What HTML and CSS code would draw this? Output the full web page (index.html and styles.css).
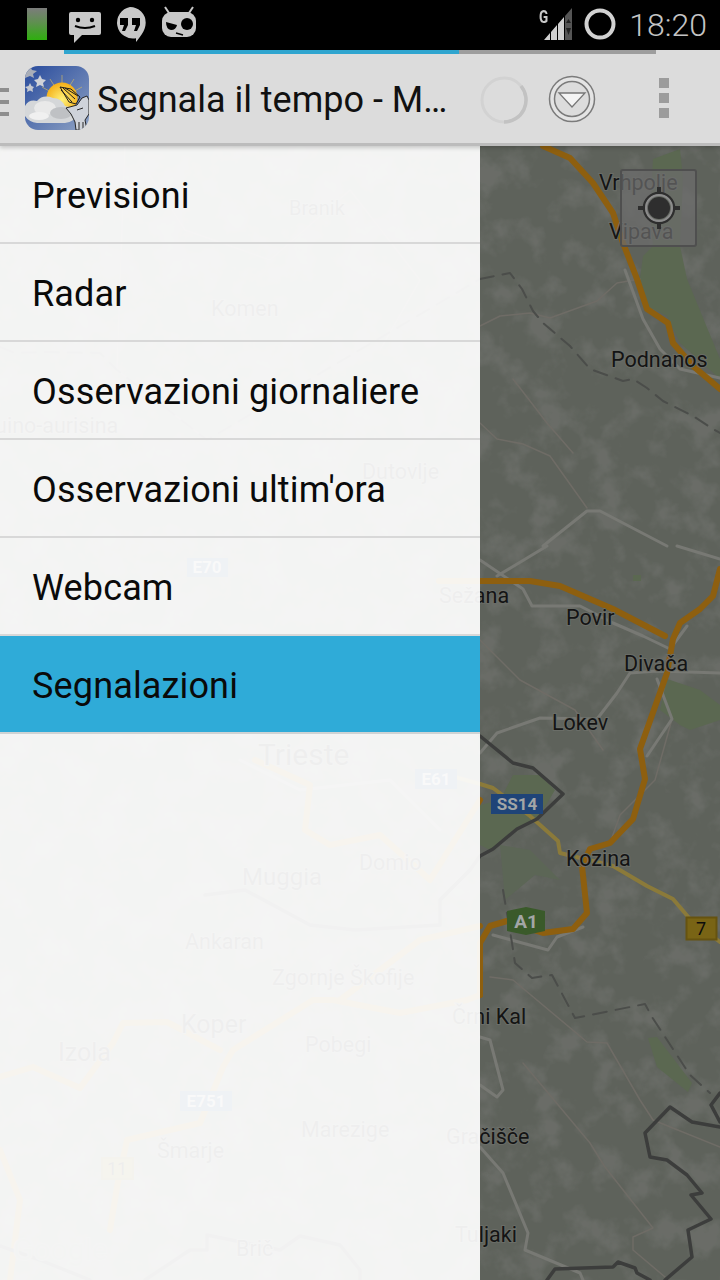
FILE: index.html
```html
<!DOCTYPE html>
<html lang="en">
<head>
  <meta charset="UTF-8" />
  <meta name="viewport" content="width=device-width, initial-scale=1.0" />
  <title>Segnala il tempo</title>
  <link rel="stylesheet" href="styles.css">
</head>
<body>
  <div class="screen">
    <div class="status-bar">
      <svg class="st-battery" width="20" height="32" viewBox="0 0 20 32">
        <defs>
          <linearGradient id="batt" x1="0" y1="0" x2="0" y2="1">
            <stop offset="0" stop-color="#7c7c7c"/>
            <stop offset="0.45" stop-color="#5f8f50"/>
            <stop offset="1" stop-color="#2eaf0e"/>
          </linearGradient>
        </defs>
        <rect width="20" height="32" fill="url(#batt)"/>
      </svg>
      <svg class="st-msg" width="34" height="32" viewBox="0 0 34 32">
        <path d="M3 0H31Q33 0 33 2V21Q33 23 31 23H14L6 31V23H3Q1 23 1 21V2Q1 0 3 0Z" fill="#c8c8c8"/>
        <circle cx="10" cy="8" r="2.2" fill="#000"/>
        <circle cx="24" cy="8" r="2.2" fill="#000"/>
        <path d="M7 14Q17 18 27 14" stroke="#000" stroke-width="2" fill="none"/>
      </svg>
      <svg class="st-hang" width="32" height="36" viewBox="0 0 32 36">
        <path d="M16 0A15.7 15.7 0 0 1 31.700 15.700C31.700 24 25 31 22 35V31.300A15.700 15.700 0 1 1 16 0Z" fill="#c8c8c8"/>
        <path d="M6 11H14V18L11 24H8L10 18H6ZM18 11H26V18L23 24H20L22 18H18Z" fill="#000"/>
      </svg>
      <svg class="st-cid" width="36" height="32" viewBox="0 0 36 32">
        <path d="M4 1L8 7H28L32 1" stroke="#c8c8c8" stroke-width="2" fill="none"/>
        <rect x="1" y="6" width="34" height="25" rx="9" fill="#c8c8c8"/>
        <path d="M5 16L16 19Q15 24 10 24Q5 23 5 16Z" fill="#000"/>
        <circle cx="26" cy="18" r="6" fill="#000"/>
        <path d="M15 27L22 29" stroke="#000" stroke-width="1.500"/>
      </svg>
      <div class="st-right">
        <span class="st-g">G</span>
        <svg class="st-signal" width="28" height="32" viewBox="0 0 28 32">
          <path d="M0 32L6 25V32ZM7 24L13 17V32H7ZM14 16L20 9V32H14Z" fill="#d0d0d0"/>
          <path d="M21 8L28 0V32H21Z" fill="#555"/>
          <path d="M24.500 11L27 15H22ZM24.500 27L22 20H27Z" fill="#222"/>
        </svg>
        <svg class="st-ring" width="32" height="32" viewBox="0 0 32 32">
          <circle cx="16" cy="16" r="13.500" stroke="#d2d2d2" stroke-width="4" fill="none"/>
        </svg>
        <span class="st-time">18:20</span>
      </div>
    </div>

    <div class="action-bar">
      <div class="progress"><div class="progress-fill"></div></div>
      <div class="action-row">
        <div class="up-bars"><i></i><i></i><i></i></div>
        <svg class="app-icon" width="64" height="64" viewBox="0 0 64 64">
          <defs>
            <linearGradient id="sky" x1="0" y1="0" x2="1" y2="1">
              <stop offset="0" stop-color="#274a9c"/>
              <stop offset="1" stop-color="#8ea2c4"/>
            </linearGradient>
            <radialGradient id="sun" cx="0.5" cy="0.55" r="0.6">
              <stop offset="0" stop-color="#fff27a"/>
              <stop offset="1" stop-color="#f3a90f"/>
            </radialGradient>
            <clipPath id="iconclip"><rect width="64" height="64" rx="13"/></clipPath>
          </defs>
          <g clip-path="url(#iconclip)">
            <rect width="64" height="64" fill="url(#sky)"/>
            <path d="M5 0L7 4L12 5L8 8L9 12L5 10L0 12V3Z" fill="#a9aeb8"/>
            <path d="M15 9L17 13L21 14L18 17L19 21L15 19L11 21L12 17L9 14L13 13Z" fill="#cfd2d8"/>
            <path d="M5 17L6.500 20L9 21L7.500 23L8 26L5 24.500L2 26L2.500 23L0 21L3.500 20Z" fill="#c4c8d0"/>
            <g stroke="#c9b56c" stroke-width="1" opacity="0.7">
              <path d="M37 32V9M37 32L25 13M37 32L49 13M37 32L17 21M37 32L57 21"/>
            </g>
            <circle cx="37" cy="32" r="15.500" fill="url(#sun)"/>
            <path d="M0 40Q4 33 12 35Q18 28 28 32Q36 32 40 40Q50 41 52 48Q50 56 40 57H12Q4 56 0 50Z" fill="#d5d7d9"/>
            <ellipse cx="20" cy="42" rx="11" ry="7" fill="#e9e9e9"/>
            <ellipse cx="14" cy="50" rx="10" ry="4" fill="#f0f0f0"/>
            <ellipse cx="36" cy="47" rx="11" ry="6" fill="#bfc1c4"/>
            <path d="M35 21L46 23L55 31L51 38L44 36ZM38 22L50 33M36 24L47 36M40 22L53 30" stroke="#1c1c1c" stroke-width="1" fill="none"/>
            <path d="M41 42L52 39L57 32L62 30L64 34V48L60 54L62 64H51L50 56L46 48Z" fill="#cfd3da" stroke="#262626" stroke-width="1"/>
            <path d="M52 44L58 42M54 56V64M58 56V64" stroke="#262626" stroke-width="1" fill="none"/>
          </g>
        </svg>
        <span class="app-title">Segnala il tempo - M…</span>
        <svg class="spinner" width="52" height="52" viewBox="0 0 52 52">
          <circle cx="26" cy="26" r="22" stroke="#d2d2d2" stroke-width="3" fill="none"/>
          <path d="M43 12A22 22 0 0 1 26 48" stroke="#c2c2c2" stroke-width="3.500" fill="none"/>
        </svg>
        <svg class="down-btn" width="48" height="48" viewBox="0 0 48 48">
          <circle cx="24" cy="24" r="22.500" stroke="#7b7b7b" stroke-width="1.500" fill="#e4e4e4"/>
          <circle cx="24" cy="24" r="17.500" stroke="#7b7b7b" stroke-width="1.500" fill="#dcdcdc"/>
          <path d="M11 18H37L24 32Z" fill="#f4f4f4" stroke="#777" stroke-width="1.300"/>
        </svg>
        <div class="overflow"><i></i><i></i><i></i></div>
      </div>
    </div>

    <div class="main">
      <svg class="map" width="720" height="1134" viewBox="0 146 720 1134">
        <defs>
          <filter id="mottle" x="0" y="0" width="100%" height="100%" color-interpolation-filters="sRGB">
            <feTurbulence type="fractalNoise" baseFrequency="0.032" numOctaves="4" seed="7"/>
            <feColorMatrix type="matrix" values="0 0 0 0 0.43  0 0 0 0 0.44  0 0 0 0 0.42  4 0 0 0 -1.900"/>
          </filter>
        </defs>
        <rect x="0" y="146" width="720" height="1134" class="land"/>
        <rect x="0" y="146" width="720" height="1134" filter="url(#mottle)" opacity="0.75"/>

        <g class="green">
          <path d="M653 159L680 149L683 179L680 246L687 279L720 359V379L680 343L667 316L647 306L640 279L643 256L653 246L650 213Z"/>
          <path d="M667 679L700 690L720 705V720L690 730L680 725L660 710Z"/>
          <path d="M513 775L540 775L555 790L540 815L515 830L490 850L480 845V805L500 800Z"/>
          <path class="green-soft" d="M500 845L530 850L560 880L535 875L505 900Z"/>
          <path d="M648 1038L657 1037L692 1083L688 1092L657 1067Z"/>
          <path d="M633 575h8v6h-8z"/>
        </g>

        <g class="thin">
          <path d="M480 326L500 316L530 313L550 318L597 301L617 283L640 279"/>
          <path d="M480 423L497 439L523 444L550 456L587 508"/>
          <path d="M513 379L547 423L573 453"/>
          <path d="M490 977L513 980L587 1042L607 1043L640 1100L653 1120L720 1147"/>
          <path d="M523 1063L590 1143L605 1167L653 1228L633 1237L633 1250L665 1277"/>
          <path d="M480 640L520 680L575 710L603 750"/>
          <path d="M672 719L655 780L620 815L610 843"/>
          <path d="M130 0L117 370L207 440"/>
          <path d="M140 160L185 230L270 260L350 190L420 280L380 350"/>
        </g>

        <g class="minor">
          <path d="M543 546L587 511H600L667 546"/>
          <path d="M547 546L497 576"/>
          <path d="M677 546L720 559"/>
          <path d="M480 560L523 589L532 606H580L613 623L643 636L670 649L687 626"/>
          <path d="M480 753L497 733L540 718L597 719L617 693L630 673L657 671L720 673"/>
          <path d="M657 679L672 719L647 756"/>
          <path d="M625 270L643 319L660 349L680 369L720 378"/>
          <path d="M493 935L548 950L557 937L583 927"/>
          <path d="M480 1037L490 1040L503 1090L497 1097L480 1085"/>
          <path d="M480 1147L503 1173L528 1233L525 1250L580 1273L583 1280"/>
          <path d="M240 760L300 790L390 780L440 830"/>
        </g>

        <g class="yellow">
          <path d="M480 784L493 788L530 816L558 841L560 853L613 866L647 886L673 899L690 919L720 942"/>
          <path d="M480 784L430 770"/>
        </g>

        <g class="highway">
          <path d="M543 146L570 158L593 183L613 213L623 243L637 279L647 309L668 323L673 343L693 366L720 389"/>
          <path d="M439 581H530L560 586L613 609L665 636"/>
          <path d="M720 569L713 596L700 609L680 623L673 639L667 673L640 749L645 779L633 819L610 843L590 849L582 866L587 913L573 929L543 933L507 921L490 926L480 943V995"/>
          <path d="M480 995L467 1000L400 1013L333 1000L313 1000L233 1050L223 1067L200 1123L127 1140L117 1187L110 1230"/>
          <path d="M0 1077L33 1067L80 1088L113 1043L123 1023L167 1022L220 1050"/>
          <path d="M255 760L310 785L305 830L330 845L380 835L430 880L480 800"/>
          <path d="M480 926L420 940L340 1000"/>
          <path d="M0 1150L20 1200L10 1280"/>
        </g>

        <g class="dashed">
          <path d="M480 279L510 273L522 289L533 311L543 323L570 346L590 369L623 381L633 379L647 388L663 401L693 416L713 429L720 433"/>
          <path d="M503 890L512 943L515 963L532 978L552 975L575 1018L645 1004L652 1017L690 1075L710 1093"/>
          <path d="M0 347L15 353L40 352L100 353L117 370L207 440L480 279"/>
        </g>

        <g class="border">
          <path d="M205 895L245 890L310 925L355 930L440 925L440 900L470 870L480 856L493 849L517 829L537 819L563 794L533 768L513 763L480 736"/>
          <path d="M720 1093L711 1105L720 1122"/>
          <path d="M720 1127L692 1122L670 1107L645 1133L650 1157L667 1160L687 1175L702 1193L691 1195L711 1219L688 1230L692 1257L665 1280"/>
          <path d="M145 1280L190 1250L207 1250V1235L280 1250L300 1236L340 1245L360 1270V1280"/>
          <path d="M547 1280L555 1269L613 1267L618 1262L635 1268L637 1273L650 1280"/>
          <path d="M0 1246L40 1260L90 1280"/>
        </g>

        <g class="labels">
          <text x="289" y="215" class="lb-20">Branik</text>
          <text x="211" y="316" class="lb-22">Komen</text>
          <text x="-19" y="433" class="lb-22">Duino-aurisina</text>
          <text x="362" y="479" class="lb-22">Dutovlje</text>
          <text x="439" y="603" class="lb-22">Sežana</text>
          <text x="258" y="765" class="lb-28">Trieste</text>
          <text x="359" y="870" class="lb-22">Domio</text>
          <text x="242" y="885" class="lb-24">Muggia</text>
          <text x="185" y="949" class="lb-22">Ankaran</text>
          <text x="272" y="985" class="lb-22">Zgornje Škofije</text>
          <text x="181" y="1033" class="lb-26">Koper</text>
          <text x="58" y="1061" class="lb-26">Izola</text>
          <text x="305" y="1052" class="lb-22">Pobegi</text>
          <text x="301" y="1137" class="lb-22">Marezige</text>
          <text x="157" y="1158" class="lb-22">Šmarje</text>
          <text x="236" y="1256" class="lb-22">Brič</text>
          <text x="13" y="1260" class="lb-google">Google</text>
          <text x="599" y="190" class="lb-22">Vrhpolje</text>
          <text x="609" y="239" class="lb-22">Vipava</text>
          <text x="611" y="367" class="lb-22">Podnanos</text>
          <text x="566" y="625" class="lb-22">Povir</text>
          <text x="624" y="671" class="lb-22">Divača</text>
          <text x="552" y="730" class="lb-22">Lokev</text>
          <text x="566" y="866" class="lb-22">Kozina</text>
          <text x="452" y="1024" class="lb-22">Črni Kal</text>
          <text x="446" y="1144" class="lb-22">Gračišče</text>
          <text x="455" y="1242" class="lb-22">Tuljaki</text>
        </g>

        <g class="shields">
          <rect x="187" y="558" width="41" height="19" class="sh-blue"/>
          <text x="207" y="573" class="sh-text">E70</text>
          <rect x="415" y="769" width="42" height="20" class="sh-blue"/>
          <text x="436" y="785" class="sh-text">E61</text>
          <rect x="180" y="1091" width="52" height="20" class="sh-blue"/>
          <text x="206" y="1107" class="sh-text">E751</text>
          <rect x="491" y="794" width="52" height="20" class="sh-blue"/>
          <text x="517" y="810" class="sh-text">SS14</text>
          <path d="M507 911L526 907L545 911V931L526 935L507 931Z" class="sh-green"/>
          <text x="526" y="928" class="sh-text sh-big">A1</text>
          <rect x="102" y="1158" width="31" height="21" class="sh-yellow"/>
          <text x="117" y="1175" class="sh-num">11</text>
          <rect x="686.500" y="917.500" width="30" height="22" class="sh-yellow"/>
          <text x="701" y="935" class="sh-num">7</text>
        </g>
      </svg>

      <button class="locate">
        <svg width="44" height="44" viewBox="0 0 44 44">
          <path d="M22 1V8M22 36V43M1 22H8M36 22H43" stroke="#2e2e2e" stroke-width="4"/>
          <circle cx="22" cy="22" r="15" stroke="#2e2e2e" stroke-width="2.500" fill="none"/>
          <circle cx="22" cy="22" r="13" stroke="#8c8c8c" stroke-width="2" fill="none"/>
          <circle cx="22" cy="22" r="11" fill="#2e2e2e"/>
        </svg>
      </button>

      <ul class="drawer">
        <li class="drawer-item">Previsioni</li>
        <li class="drawer-item">Radar</li>
        <li class="drawer-item">Osservazioni giornaliere</li>
        <li class="drawer-item">Osservazioni ultim'ora</li>
        <li class="drawer-item">Webcam</li>
        <li class="drawer-item selected">Segnalazioni</li>
      </ul>
    </div>
  </div>
</body>
</html>
```

FILE: styles.css
```css
* {
  margin: 0;
  padding: 0;
  box-sizing: border-box;
}

html, body {
  width: 720px;
  height: 1280px;
  overflow: hidden;
  font-family: Roboto, "Liberation Sans", sans-serif;
  background-color: #000;
}

.screen {
  width: 720px;
  height: 1280px;
  display: flex;
  flex-direction: column;
}

/* status bar */
.status-bar {
  height: 50px;
  flex: none;
  background-color: #000;
  display: flex;
  align-items: flex-start;
  padding-left: 27px;
}

.status-bar svg {
  display: block;
  flex: none;
}

.st-battery { margin-top: 8px; }
.st-msg { margin: 12px 0 0 21px; }
.st-hang { margin: 7px 0 0 12px; }
.st-cid { margin: 6px 0 0 15px; }

.st-right {
  margin-left: auto;
  display: flex;
  align-items: flex-start;
  padding-right: 13px;
}

.st-g {
  font-size: 18px;
  font-weight: 700;
  line-height: 18px;
  color: #c8c8c8;
  margin-top: 8px;
  width: 10px;
  transform: scaleX(0.75);
  transform-origin: left;
}

.st-signal { margin: 8px 0 0 -5px; }
.st-ring { margin: 8px 0 0 12px; }

.st-time {
  font-size: 32px;
  font-weight: 300;
  line-height: 50px;
  color: #c4c4c4;
  margin-left: 13px;
}

/* action bar */
.action-bar {
  height: 96px;
  flex: none;
  position: relative;
  z-index: 3;
  background-color: #dcdcdc;
  border-bottom: 3px solid #bcbcbc;
  box-shadow: 0 2px 4px rgba(0, 0, 0, 0.18);
}

.progress {
  height: 4px;
  margin: 0 64px;
  background-color: #9d9d9d;
}

.progress-fill {
  width: 395px;
  height: 4px;
  background-color: #2fa5cf;
}

.action-row {
  height: 89px;
  display: flex;
  align-items: center;
  position: relative;
}

.up-bars {
  width: 9px;
  display: flex;
  flex-direction: column;
  gap: 8px;
  margin-top: 7px;
}

.up-bars i {
  display: block;
  height: 4px;
  background-color: #8e8e8e;
}

.app-icon {
  flex: none;
  margin: -2px 0 0 16px;
}

.app-title {
  width: 358px;
  margin: 2px 0 0 8px;
  font-size: 36px;
  color: #111;
  white-space: nowrap;
}

.spinner {
  flex: none;
  margin: 2px 0 0 23px;
}

.down-btn {
  flex: none;
  margin: 0 0 0 18px;
}

.overflow {
  display: flex;
  flex-direction: column;
  gap: 5px;
  margin: -2px 0 0 63px;
}

.overflow i {
  display: block;
  width: 10px;
  height: 10px;
  background-color: #9c9c9c;
}

/* map and drawer */
.main {
  flex: 1;
  position: relative;
  overflow: hidden;
}

.map {
  position: absolute;
  top: 0;
  left: 0;
  display: block;
}

.land { fill: #5e625b; }
.green path { fill: #5b6851; }
.green .green-soft { fill: #5c6656; }

.map g path { stroke-linejoin: round; stroke-linecap: round; }

.thin path { fill: none; stroke: #6f6c66; stroke-width: 1.500; }
.minor path { fill: none; stroke: #787974; stroke-width: 3; }
.yellow path { fill: none; stroke: #8b7a3a; stroke-width: 4; }
.highway path { fill: none; stroke: #8e5f0f; stroke-width: 6; }
.dashed path { fill: none; stroke: #4b4d4a; stroke-width: 2; stroke-dasharray: 14 9; stroke-linecap: butt; }
.border path { fill: none; stroke: #3c3d3c; stroke-width: 3.500; }

.labels text {
  font-family: Roboto, sans-serif;
  fill: #141414;
  stroke: #6a6d67;
  stroke-width: 2px;
  paint-order: stroke;
}

.lb-20 { font-size: 20px; }
.lb-22 { font-size: 21.500px; }
.lb-24 { font-size: 24px; }
.lb-26 { font-size: 25px; }
.lb-28 { font-size: 30px; }

.labels .lb-google {
  font-size: 30px;
  fill: #5e625b;
}

.sh-blue { fill: #1f4478; }
.sh-green { fill: #3a5a2a; }
.sh-yellow { fill: #796415; stroke: #665310; stroke-width: 2; }

.sh-text {
  font-family: Roboto, sans-serif;
  font-size: 17px;
  font-weight: 700;
  fill: #a3a6a6;
  text-anchor: middle;
}

.sh-big { font-size: 19px; }

.sh-num {
  font-family: Roboto, sans-serif;
  font-size: 18px;
  fill: #0c0c0c;
  text-anchor: middle;
}

.locate {
  position: absolute;
  top: 23px;
  left: 620px;
  width: 77px;
  height: 78px;
  border: 2px solid #4f4f4f;
  border-radius: 3px;
  background-color: rgba(108, 108, 108, 0.72);
  display: flex;
  align-items: center;
  justify-content: center;
}

.locate svg {
  display: block;
}

.drawer {
  position: absolute;
  top: 0;
  left: 0;
  bottom: 0;
  width: 480px;
  list-style: none;
  background-color: rgba(255, 255, 255, 0.93);
}

.drawer-item {
  height: 98px;
  display: flex;
  align-items: center;
  padding: 4px 0 0 32px;
  font-size: 36px;
  letter-spacing: 0.15px;
  color: #0a0a0a;
  border-bottom: 2px solid #d8d8d8;
}

.drawer-item.selected {
  background-color: #2fabd8;
  border-bottom-color: #cfd3d4;
}
```
